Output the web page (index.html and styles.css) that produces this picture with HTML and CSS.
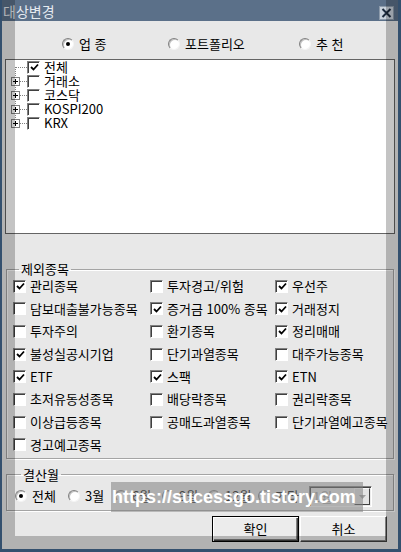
FILE: index.html
```html
<!DOCTYPE html>
<html lang="ko">
<head>
  <meta charset="UTF-8">
  <title>대상변경</title>
  <link rel="stylesheet" href="styles.css">
</head>
<body>

<div class="win">
  <div class="title">
    <span class="title-text">대상변경</span>
    <span class="close">
      <svg width="11" height="10" viewBox="0 0 11 10"><path d="M1.5 1 L9.5 9 M9.5 1 L1.5 9" stroke="#1c2a3c" stroke-width="2"/></svg>
    </span>
  </div>

  <div class="mode-row">
    <label class="opt"><span class="radio on"></span>업 종</label>
    <label class="opt"><span class="radio"></span>포트폴리오</label>
    <label class="opt"><span class="radio"></span>추 천</label>
  </div>

  <div class="tree">
    <svg class="twigs" width="21" height="70" viewBox="0 0 21 70">
      <g stroke="#808080" stroke-dasharray="1 1" fill="none">
        <path d="M9.5 7 V63"/>
        <path d="M10 7.5 H21 M14 21.5 H21 M14 35.5 H21 M14 49.5 H21 M14 63.5 H21"/>
      </g>
      <g fill="#fff" stroke="#808080">
        <rect x="5.5" y="17.5" width="8" height="8"/>
        <rect x="5.5" y="31.5" width="8" height="8"/>
        <rect x="5.5" y="45.5" width="8" height="8"/>
        <rect x="5.5" y="59.5" width="8" height="8"/>
      </g>
      <g stroke="#000">
        <path d="M7 21.5 H12 M9.5 19 V24"/>
        <path d="M7 35.5 H12 M9.5 33 V38"/>
        <path d="M7 49.5 H12 M9.5 47 V52"/>
        <path d="M7 63.5 H12 M9.5 61 V66"/>
      </g>
    </svg>
    <ul class="nodes">
      <li><span class="cb on"><svg width="9" height="9" viewBox="0 0 9 9"><path d="M1 4 L3.5 6.5 L8 1.5" stroke="#000" stroke-width="1.8" fill="none"/></svg></span>전체</li>
      <li><span class="cb"></span>거래소</li>
      <li><span class="cb"></span>코스닥</li>
      <li><span class="cb"></span>KOSPI200</li>
      <li><span class="cb"></span>KRX</li>
    </ul>
  </div>

  <fieldset class="group excl">
    <legend>제외종목</legend>
    <div class="checks">
      <label class="item"><span class="cb on"><svg width="9" height="9" viewBox="0 0 9 9"><path d="M1 4 L3.5 6.5 L8 1.5" stroke="#000" stroke-width="1.8" fill="none"/></svg></span>관리종목</label>
      <label class="item"><span class="cb"></span>투자경고/위험</label>
      <label class="item"><span class="cb on"><svg width="9" height="9" viewBox="0 0 9 9"><path d="M1 4 L3.5 6.5 L8 1.5" stroke="#000" stroke-width="1.8" fill="none"/></svg></span>우선주</label>

      <label class="item"><span class="cb"></span>담보대출불가능종목</label>
      <label class="item"><span class="cb on"><svg width="9" height="9" viewBox="0 0 9 9"><path d="M1 4 L3.5 6.5 L8 1.5" stroke="#000" stroke-width="1.8" fill="none"/></svg></span>증거금 100% 종목</label>
      <label class="item"><span class="cb on"><svg width="9" height="9" viewBox="0 0 9 9"><path d="M1 4 L3.5 6.5 L8 1.5" stroke="#000" stroke-width="1.8" fill="none"/></svg></span>거래정지</label>

      <label class="item"><span class="cb"></span>투자주의</label>
      <label class="item"><span class="cb"></span>환기종목</label>
      <label class="item"><span class="cb on"><svg width="9" height="9" viewBox="0 0 9 9"><path d="M1 4 L3.5 6.5 L8 1.5" stroke="#000" stroke-width="1.8" fill="none"/></svg></span>정리매매</label>

      <label class="item"><span class="cb on"><svg width="9" height="9" viewBox="0 0 9 9"><path d="M1 4 L3.5 6.5 L8 1.5" stroke="#000" stroke-width="1.8" fill="none"/></svg></span>불성실공시기업</label>
      <label class="item"><span class="cb"></span>단기과열종목</label>
      <label class="item"><span class="cb"></span>대주가능종목</label>

      <label class="item"><span class="cb on"><svg width="9" height="9" viewBox="0 0 9 9"><path d="M1 4 L3.5 6.5 L8 1.5" stroke="#000" stroke-width="1.8" fill="none"/></svg></span>ETF</label>
      <label class="item"><span class="cb on"><svg width="9" height="9" viewBox="0 0 9 9"><path d="M1 4 L3.5 6.5 L8 1.5" stroke="#000" stroke-width="1.8" fill="none"/></svg></span>스팩</label>
      <label class="item"><span class="cb on"><svg width="9" height="9" viewBox="0 0 9 9"><path d="M1 4 L3.5 6.5 L8 1.5" stroke="#000" stroke-width="1.8" fill="none"/></svg></span>ETN</label>

      <label class="item"><span class="cb"></span>초저유동성종목</label>
      <label class="item"><span class="cb"></span>배당락종목</label>
      <label class="item"><span class="cb"></span>권리락종목</label>

      <label class="item"><span class="cb"></span>이상급등종목</label>
      <label class="item"><span class="cb"></span>공매도과열종목</label>
      <label class="item"><span class="cb"></span>단기과열예고종목</label>

      <label class="item"><span class="cb"></span>경고예고종목</label>
    </div>
  </fieldset>

  <fieldset class="group month">
    <legend>결산월</legend>
    <div class="months">
      <label class="opt"><span class="radio on"></span>전체</label>
      <label class="opt"><span class="radio"></span>3월</label>
      <label class="opt"><span class="radio"></span>6월</label>
      <label class="opt"><span class="radio"></span>9월</label>
      <label class="opt"><span class="radio"></span>12월</label>
      <label class="opt"><span class="radio"></span>기타</label>
      <span class="combo"><span class="combo-val">1월</span><span class="combo-btn"><svg width="7" height="4" viewBox="0 0 7 4"><path d="M0 0 H7 L3.5 4 Z" fill="#a0a0a0"/></svg></span></span>
    </div>
  </fieldset>

  <div class="actions">
    <button class="btn default">확인</button>
    <button class="btn">취소</button>
  </div>

  <!-- darker margins of the capture -->
  <div class="shade shade-left"></div>
  <div class="shade shade-right"></div>
  <div class="shade shade-bottom"></div>

  <div class="watermark">https://sucessgo.tistory.com</div>
</div>

</body>
</html>
```

FILE: styles.css
```css
body { margin: 0; font-family: "Noto Sans CJK KR", "Noto Sans", sans-serif; font-size: 13px; color: #000; }
.win {
  position: relative; width: 401px; height: 552px; box-sizing: border-box; overflow: hidden;
  background: #e8e8e8; border-left: 2px solid #34506e; border-right: 3px solid #34506e; border-bottom: 3px solid #34506e;
}

.title { height: 21px; background: #5b7089; display: flex; align-items: center; justify-content: space-between; padding: 0 4px 0 1px; }
.title-text { color: #e4eaf0; font-size: 14px; line-height: 16px; }
.close {
  width: 15px; height: 14px; box-sizing: border-box; margin-top: 4px; background: #c9d2dc;
  border: 1px solid #8d9bab; display: flex; align-items: center; justify-content: center;
}

.opt { display: flex; align-items: center; gap: 5px; line-height: 14px; white-space: nowrap; }
.radio {
  width: 12px; height: 12px; box-sizing: border-box; border-radius: 50%; background: #fff; flex: none;
  border: 1px solid; border-color: #808080 #f4f4f4 #f4f4f4 #808080; box-shadow: inset 1px 1px 0 #c0c0c0;
  display: flex; align-items: center; justify-content: center;
}
.radio.on::after { content: ""; width: 4px; height: 4px; border-radius: 50%; background: #000; }

.cb {
  width: 13px; height: 13px; box-sizing: border-box; background: #fff; flex: none;
  border: 1px solid; border-color: #808080 #fff #fff #808080; box-shadow: inset 1px 1px 0 #404040;
  display: flex; align-items: center; justify-content: center; padding: 1px 0 0 1px;
}

.mode-row { display: grid; grid-template-columns: 106px 131px auto; padding-left: 60px; margin-top: 16px; height: 14px; }

.tree {
  display: flex; margin: 8px 0 0 3px; width: 390px; height: 175px; box-sizing: border-box;
  background: #fff; border: 1px solid #646464; padding-top: 0;
}
.twigs { flex: none; }
.nodes { list-style: none; margin: 0; padding: 0; }
.nodes li { display: flex; align-items: center; gap: 4px; height: 14px; line-height: 14px; }

.group { margin: 0 0 0 4px; width: 388px; box-sizing: border-box; padding: 0; border: 1px solid #a4a4a4; box-shadow: 1px 1px 0 #fff, inset 1px 1px 0 #fff; min-width: 0; }
.group legend { margin-left: 6px; padding: 0 2px; line-height: 14px; }

.excl { margin-top: 28px; padding: 3px 0 6px 6px; }
.checks { display: grid; grid-template-columns: 137px 125px 1fr; grid-auto-rows: 14px; row-gap: 8.7px; }
.item { display: flex; align-items: center; gap: 4px; line-height: 14px; white-space: nowrap; }

.month { margin-top: 9px; padding: 4px 0 3px 8px; }
.months { display: grid; grid-template-columns: 53px 47px 47px 46px 50px 51px auto; align-items: center; height: 21px; }
.combo {
  display: flex; align-items: center; justify-content: space-between; width: 63px; height: 21px; box-sizing: border-box;
  background: #ececec; border: 1px solid; border-color: #808080 #fff #fff #808080;
  box-shadow: inset 1px 1px 0 #404040; padding: 1px 1px 0 3px;
}
.combo-val { color: #a0a0a0; }
.combo-btn {
  width: 16px; height: 17px; box-sizing: border-box; background: #e4e4e4; display: flex; align-items: center; justify-content: center;
  border: 1px solid; border-color: #f8f8f8 #404040 #404040 #f8f8f8;
}

.actions { display: flex; justify-content: flex-end; gap: 1px; padding-right: 11px; margin-top: 5px; }
.btn {
  width: 87px; height: 26px; font: inherit; color: #000; background: #ececec; padding: 0; cursor: pointer;
  border: 1px solid; border-color: #fff #404040 #404040 #fff; box-shadow: inset -1px -1px 0 #808080;
}
.btn.default { border: 1px solid #000; box-shadow: inset 1px 1px 0 #fff, inset -1px -1px 0 #404040, inset -2px -2px 0 #808080; }

.shade { position: absolute; background: rgba(0, 0, 0, 0.23); pointer-events: none; }
.shade-left { left: 0; top: 0; width: 13px; bottom: 0; }
.shade-right { left: 384px; top: 0; width: 12px; bottom: 0; }
.shade-bottom { left: 13px; width: 371px; top: 536px; bottom: 0; }

.watermark {
  position: absolute; left: 109px; top: 482px; width: 252px; height: 30px; padding-left: 1px; box-sizing: border-box;
  background: rgba(128, 128, 128, 0.55); color: #fff; font: bold 18px/30px "Liberation Sans", Arial, sans-serif; white-space: nowrap;
}
```
